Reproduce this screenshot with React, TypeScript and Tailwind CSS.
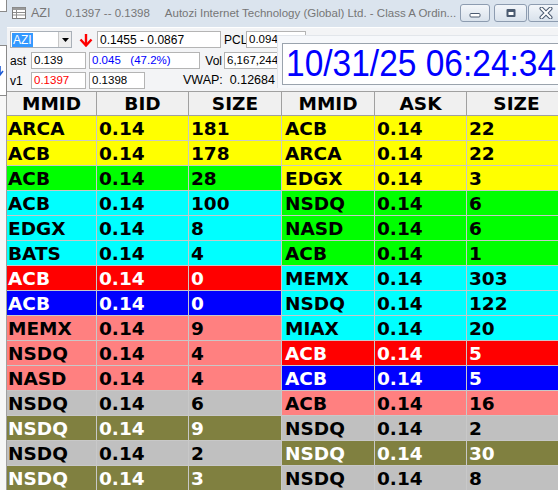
import React from "react";

type Tone = "yellow" | "green" | "cyan" | "red" | "blue" | "salmon" | "gray" | "olive";

type Quote = { mmid: string; price: string; size: string; tone: Tone };

const toneClass: Record<Tone, string> = {
  yellow: "bg-[#ffff00] text-black",
  green: "bg-[#00ff00] text-black",
  cyan: "bg-[#00ffff] text-black",
  red: "bg-[#ff0000] text-white",
  blue: "bg-[#0000ff] text-white",
  salmon: "bg-[#ff8080] text-black",
  gray: "bg-[#c0c0c0] text-black",
  olive: "bg-[#808040] text-white",
};

const bids: Quote[] = [
  { mmid: "ARCA", price: "0.14", size: "181", tone: "yellow" },
  { mmid: "ACB", price: "0.14", size: "178", tone: "yellow" },
  { mmid: "ACB", price: "0.14", size: "28", tone: "green" },
  { mmid: "ACB", price: "0.14", size: "100", tone: "cyan" },
  { mmid: "EDGX", price: "0.14", size: "8", tone: "cyan" },
  { mmid: "BATS", price: "0.14", size: "4", tone: "cyan" },
  { mmid: "ACB", price: "0.14", size: "0", tone: "red" },
  { mmid: "ACB", price: "0.14", size: "0", tone: "blue" },
  { mmid: "MEMX", price: "0.14", size: "9", tone: "salmon" },
  { mmid: "NSDQ", price: "0.14", size: "4", tone: "salmon" },
  { mmid: "NASD", price: "0.14", size: "4", tone: "salmon" },
  { mmid: "NSDQ", price: "0.14", size: "6", tone: "gray" },
  { mmid: "NSDQ", price: "0.14", size: "9", tone: "olive" },
  { mmid: "NSDQ", price: "0.14", size: "2", tone: "gray" },
  { mmid: "NSDQ", price: "0.14", size: "3", tone: "olive" },
];

const asks: Quote[] = [
  { mmid: "ACB", price: "0.14", size: "22", tone: "yellow" },
  { mmid: "ARCA", price: "0.14", size: "22", tone: "yellow" },
  { mmid: "EDGX", price: "0.14", size: "3", tone: "yellow" },
  { mmid: "NSDQ", price: "0.14", size: "6", tone: "green" },
  { mmid: "NASD", price: "0.14", size: "6", tone: "green" },
  { mmid: "ACB", price: "0.14", size: "1", tone: "green" },
  { mmid: "MEMX", price: "0.14", size: "303", tone: "cyan" },
  { mmid: "NSDQ", price: "0.14", size: "122", tone: "cyan" },
  { mmid: "MIAX", price: "0.14", size: "20", tone: "cyan" },
  { mmid: "ACB", price: "0.14", size: "5", tone: "red" },
  { mmid: "ACB", price: "0.14", size: "5", tone: "blue" },
  { mmid: "ACB", price: "0.14", size: "16", tone: "salmon" },
  { mmid: "NSDQ", price: "0.14", size: "2", tone: "gray" },
  { mmid: "NSDQ", price: "0.14", size: "30", tone: "olive" },
  { mmid: "NSDQ", price: "0.14", size: "8", tone: "gray" },
];

const ui = "font-['Liberation_Sans',Arial,sans-serif]";
const grid = "font-['DejaVu_Sans',Verdana,sans-serif] font-bold text-[18.5px] leading-none";

function TextBox({ w, children, className = "" }: { w: string; children?: React.ReactNode; className?: string }) {
  return (
    <div className={`${w} h-[17px] shrink-0 border border-[#b4b4b4] bg-white pl-[2px] flex items-center whitespace-pre overflow-hidden ${className}`}>
      {children}
    </div>
  );
}

function Book({ heads, rows, widths, pads }: { heads: string[]; rows: Quote[]; widths: string[]; pads: string[] }) {
  return (
    <div className={`flex flex-col ${grid}`}>
      <div className="flex h-[25px] border-t border-[#a0a0a0] bg-[#f0f0f0]">
        {heads.map((h, i) => (
          <div key={i} className={`${widths[i]} shrink-0 border-r border-b border-[#a0a0a0] flex items-center justify-center pt-[1px] text-black`}>
            {h}
          </div>
        ))}
      </div>
      {rows.map((r, i) => (
        <div key={i} className={`flex h-[25px] shrink-0 ${toneClass[r.tone]}`}>
          {[r.mmid, r.price, r.size].map((v, j) => (
            <div key={j} className={`${widths[j]} ${pads[j]} shrink-0 border-r border-b border-[#c8c8c8] flex items-center pt-[2px]`}>
              {v}
            </div>
          ))}
        </div>
      ))}
    </div>
  );
}

function TitleButtons() {
  const btn = "h-[18px] shrink-0 rounded-[3px] border border-[#8d9cb0] bg-linear-to-b from-[#f3f6fa] to-[#d9e2ec] flex items-center justify-center";
  return (
    <div className="w-[98px] shrink-0 flex items-start pt-[4px] overflow-hidden self-stretch">
      <div className={`${btn} w-[30px]`}>
        <svg width="12" height="12" viewBox="0 0 12 12">
          <rect x="1" y="6.5" width="10" height="3.5" rx="1" fill="#fff" stroke="#4a5a70" strokeWidth="1" />
        </svg>
      </div>
      <div className={`${btn} w-[33px] ml-[4px]`}>
        <svg width="12" height="12" viewBox="0 0 12 12">
          <rect x="1.5" y="2" width="9" height="8" rx="1" fill="#4a5a70" />
          <rect x="3.5" y="5" width="5" height="3" fill="#fff" />
        </svg>
      </div>
      <div className={`${btn} w-[45px] ml-[1px] justify-start pl-[10px]`}>
        <svg width="14" height="12" viewBox="0 0 14 12">
          <path d="M2.5 1.5 L11.5 10.5 M11.5 1.5 L2.5 10.5" stroke="#4a5a70" strokeWidth="4" strokeLinecap="round" />
          <path d="M2.5 1.5 L11.5 10.5 M11.5 1.5 L2.5 10.5" stroke="#fff" strokeWidth="2" strokeLinecap="round" />
        </svg>
      </div>
    </div>
  );
}

export default function App() {
  return (
    <div className={`w-[558px] h-[490px] overflow-hidden relative flex bg-[#f0f0f0] ${ui}`}>
      {/* edge of the window behind */}
      <div className="w-[7px] shrink-0 flex flex-col">
        <div className="h-[12px] bg-white border-r border-b border-[#8a8a8a]" />
        <div className="h-[33px] bg-[#dbe4ee]" />
        <div className="h-[51px] bg-white border-r border-y border-[#8a8a8a] flex items-center overflow-hidden">
          <svg width="5" height="12" viewBox="0 0 5 12" className="shrink-0">
            <path d="M0 1 V9 M-3 6 L0 10 L3 6" stroke="#1d5bd6" strokeWidth="1.6" fill="none" />
          </svg>
        </div>
        <div className="flex-1 bg-[#f7f7f7] border-r border-[#a0a0a0]" />
      </div>

      <div className="w-[551px] shrink-0 flex flex-col">
        {/* title bar */}
        <div className="h-[28px] shrink-0 bg-[#dbe4ee] border-b border-white flex items-center text-[11.5px] text-[#767676] pl-[5px] whitespace-nowrap">
          <svg width="14" height="12" viewBox="0 0 14 12" className="shrink-0 -mt-[2px]">
            <rect x="0.5" y="0.5" width="13" height="11" fill="#fff" stroke="#7c7c7c" />
            <rect x="0.5" y="0.5" width="13" height="2.5" fill="#9a9a9a" />
            <path d="M4.5 3 V11.5 M1 5.5 H13 M1 8 H13" stroke="#8c8c8c" strokeWidth="1" />
          </svg>
          <div className="flex-1 min-w-0 flex items-center overflow-hidden">
            <span className="ml-[5px] text-[12.5px] shrink-0">AZI</span>
            <span className="ml-[15px] text-[11.5px] shrink-0">0.1397 -- 0.1398</span>
            <span className="ml-[15px] text-[11.5px] shrink-0">Autozi Internet Technology (Global) Ltd. - Class A Ordin...</span>
          </div>
          <TitleButtons />
        </div>

        {/* quote panel */}
        <div className="h-[63px] shrink-0 flex flex-col pl-[3px] text-[11.5px] leading-none text-black bg-[#f3f4f6]">
          <div className="flex items-center mt-[3px]">
            <div className="w-[62px] h-[17px] border border-[#a9b0b8] bg-white flex items-center pl-[1px]">
              <span className="bg-[#3399ff] text-white text-[12px] px-[1px] h-[14px] flex items-center">AZI</span>
              <div className="ml-auto w-[13px] h-[15px] bg-[#eeeeee] border-l border-[#c8c8c8] flex items-center justify-center">
                <svg width="7" height="4" viewBox="0 0 7 4"><path d="M0 0 H7 L3.5 4 Z" fill="#000" /></svg>
              </div>
            </div>
            <svg width="14" height="14" viewBox="0 0 14 14" className="ml-[7px] shrink-0">
              <path d="M7 1 V12" stroke="#ff0000" strokeWidth="2.4" />
              <path d="M1.5 6.5 L7 12.5 L12.5 6.5" stroke="#ff0000" strokeWidth="2.4" fill="none" />
            </svg>
            <TextBox w="w-[124px]" className="ml-[4px] text-[12px]">0.1455 - 0.0867</TextBox>
            <span className="w-[25px] pl-[3px] text-[12px]">PCL</span>
            <TextBox w="w-[60px]">0.094</TextBox>
          </div>
          <div className="flex items-center mt-[4px]">
            <span className="w-[21px] text-[12px]">ast</span>
            <TextBox w="w-[55px]">0.139</TextBox>
            <TextBox w="w-[111px]" className="ml-[3px] text-[#0000ff]">0.045   (47.2%)</TextBox>
            <span className="w-[24px] text-right pr-[2px] text-[12px]">Vol</span>
            <TextBox w="w-[58px]" className="pl-[1px]">6,167,244</TextBox>
          </div>
          <div className="flex items-center mt-[3px]">
            <span className="w-[21px] text-[12px]">v1</span>
            <TextBox w="w-[55px]" className="text-[#ff0000]">0.1397</TextBox>
            <TextBox w="w-[56px]" className="ml-[3px]">0.1398</TextBox>
            <span className="ml-[38px] text-[12.5px] whitespace-pre">VWAP:  0.12684</span>
          </div>
        </div>

        {/* level 2 books */}
        <div className="flex flex-1 bg-white">
          <Book
            heads={["MMID", "BID", "SIZE"]}
            rows={bids}
            widths={["w-[90px]", "w-[92px]", "w-[93px]"]}
            pads={["pl-[1px]", "pl-[2px]", "pl-[2px]"]}
          />
          <Book
            heads={["MMID", "ASK", "SIZE"]}
            rows={asks}
            widths={["w-[93px]", "w-[92px]", "w-[100px]"]}
            pads={["pl-[3px]", "pl-[2px]", "pl-[2px]"]}
          />
        </div>
      </div>

      {/* clock overlay */}
      <div className="absolute left-[277px] top-[35px] w-[290px] h-[53px] bg-[#f6f8fb] border-l border-t border-[#e2e6eb]">
        <div className="absolute left-[4px] top-[7px] right-0 h-[42px] border border-[#9aa3ad] bg-white flex items-center pl-[3px] overflow-hidden">
          <span className="text-[#0000ff] text-[33.5px] leading-none whitespace-nowrap scale-y-[1.13] origin-center font-['Liberation_Sans',Arial,sans-serif]">
            10/31/25 06:24:34
          </span>
        </div>
      </div>
    </div>
  );
}
